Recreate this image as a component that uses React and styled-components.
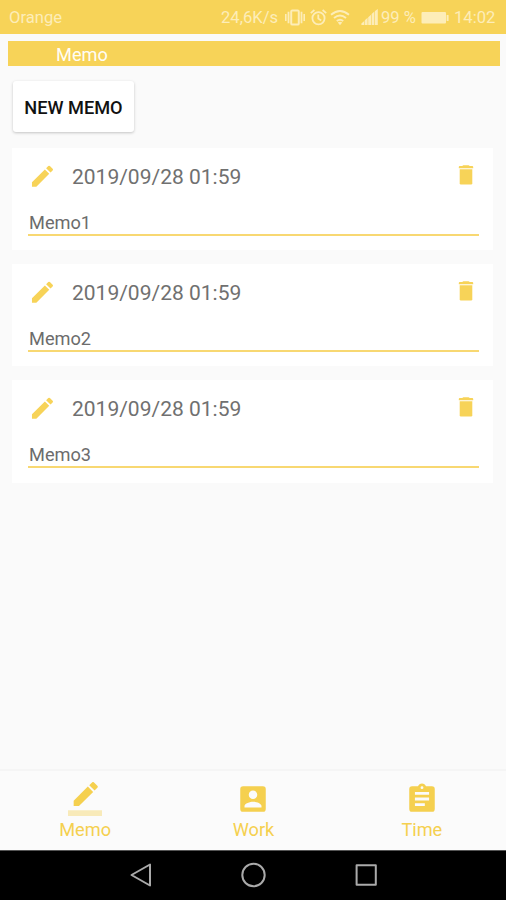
import React from "react";
import styled, { createGlobalStyle } from "styled-components";

const memos = [
  { date: "2019/09/28 01:59", text: "Memo1" },
  { date: "2019/09/28 01:59", text: "Memo2" },
  { date: "2019/09/28 01:59", text: "Memo3" },
];

const PencilIcon = () => (
  <svg width="28" height="28" viewBox="0 0 24 24" fill="currentColor">
    <path d="M3.4 17.45V21.2h3.75L18.21 10.14l-3.75-3.75L3.4 17.45zM21.11 7.24a1 1 0 0 0 0-1.41l-2.34-2.34a1 1 0 0 0-1.41 0l-1.83 1.83 3.75 3.75 1.83-1.83z" />
  </svg>
);

const TrashIcon = () => (
  <svg width="16" height="20" viewBox="0 0 16 20" fill="currentColor">
    <path d="M.8 3.2V1.9Q.8 1.1 1.8 1.1H4.2L5.4.3h5.2l1.2.8h2.4q1 0 1 .8v1.3z" />
    <path d="M1.7 4.3h12.6v13.9q0 1.2-1.2 1.2H2.9q-1.2 0-1.2-1.2z" />
  </svg>
);

const tabs = [
  {
    label: "Memo",
    icon: (
      <>
        <path d="M17.75 7L14 3.25l-10 10V17h3.75l10-10zm2.96-2.96a1 1 0 0 0 0-1.41L18.37.29a1 1 0 0 0-1.41 0L15 2.25 18.75 6l1.96-1.96z" />
        <path d="M0 20h24v4H0z" fillOpacity=".38" />
      </>
    ),
  },
  {
    label: "Work",
    icon: (
      <path d="M3 5v14a2 2 0 0 0 2 2h14a2 2 0 0 0 2-2V5a2 2 0 0 0-2-2H5a2 2 0 0 0-2 2zm12 4a3 3 0 1 1-6 0 3 3 0 0 1 6 0zm-9 8c0-2 4-3.1 6-3.1s6 1.1 6 3.1v1H6v-1z" />
    ),
  },
  {
    label: "Time",
    icon: (
      <path d="M19 3h-4.18C14.4 1.84 13.3 1 12 1s-2.4.84-2.82 2H5a2 2 0 0 0-2 2v14a2 2 0 0 0 2 2h14a2 2 0 0 0 2-2V5a2 2 0 0 0-2-2zm-7 0a1 1 0 1 1 0 2 1 1 0 0 1 0-2zm2 14H7v-2h7v2zm3-4H7v-2h10v2zm0-4H7V7h10v2z" />
    ),
  },
];

export default function App() {
  return (
    <Phone>
      <GlobalStyle />
      <StatusBar>
        <StatusText>Orange</StatusText>
        <StatusIcons>
          <StatusText $width={59}>24,6K/s</StatusText>
          <svg width="20" height="17" viewBox="0 0 20 17" fill="currentColor">
            <path d="M0 5h1.6v7H0zM2.6 2.8h1.8v11.4H2.6zM15.6 2.8h1.8v11.4h-1.8zM18.4 5H20v7h-1.6z" />
            <rect x="6.2" y="1.4" width="7.6" height="14.2" rx="1.2" fill="none" stroke="currentColor" strokeWidth="2" />
          </svg>
          <Alarm width="17" height="17" viewBox="0 0 17 17" fill="none" stroke="currentColor" strokeWidth="1.8">
            <circle cx="8.5" cy="9.2" r="6.1" />
            <path d="M.8 4.1L4.4 1M16.2 4.1L12.6 1M8.3 5.6v4l2.9 1.8" />
          </Alarm>
          <svg width="20" height="17" viewBox="0 0 20 17" fill="none" stroke="currentColor" strokeWidth="1.9">
            <path d="M1 5.7q9-7.6 18 0M4 9q6-5.2 12 0M6.8 12q3.2-2.7 6.4 0" />
            <path d="M7.8 13.5q2.2-1.6 4.4 0L10 16.2z" fill="currentColor" stroke="none" />
          </svg>
          <Signal width="18" height="17" viewBox="0 0 18 17" fill="currentColor">
            <path d="M.4 15.9v-1.5l2.8-2.5v4zM3.8 15.9v-4.6l2.8-2.5v7.1zM7.2 15.9V8.2L10 5.7v10.2zM10.6 15.9V5.1l2.8-2.5v13.3zM14 15.9V2L16.8 0v15.9z" />
          </Signal>
          <StatusText $width={35}>99 %</StatusText>
          <svg width="28" height="14" viewBox="0 0 28 14" fill="currentColor">
            <rect x=".5" y="1" width="24.5" height="11.5" rx="1" />
            <rect x="25.6" y="4" width="2" height="6" rx=".6" />
          </svg>
          <StatusText $width={42}>14:02</StatusText>
        </StatusIcons>
      </StatusBar>
      <TitleBar>Memo</TitleBar>
      <NewButton>NEW MEMO</NewButton>
      <MemoList>
        {memos.map((memo) => (
          <Card key={memo.text}>
            <CardHead>
              <PencilIcon />
              <MemoDate>{memo.date}</MemoDate>
              <TrashIcon />
            </CardHead>
            <MemoText>{memo.text}</MemoText>
          </Card>
        ))}
      </MemoList>
      <TabBar>
        {tabs.map((tab) => (
          <Tab key={tab.label}>
            <svg width="34" height="34" viewBox="0 0 24 24" fill="currentColor">
              {tab.icon}
            </svg>
            <span>{tab.label}</span>
          </Tab>
        ))}
      </TabBar>
      <SystemNav>
        <svg width="24" height="26" viewBox="0 0 24 26">
          <path d="M3.5 13L22 2.5v21z" />
        </svg>
        <svg width="26" height="26" viewBox="0 0 26 26">
          <circle cx="13.5" cy="13" r="11.2" />
        </svg>
        <svg width="24" height="26" viewBox="0 0 24 26">
          <rect x="2.6" y="3.2" width="19.2" height="19.6" />
        </svg>
      </SystemNav>
    </Phone>
  );
}

const GlobalStyle = createGlobalStyle`
  * {
    box-sizing: border-box;
  }
  body {
    margin: 0;
    font-family: Roboto, sans-serif;
  }
  svg {
    display: block;
    flex: none;
  }
`;

const Phone = styled.div`
  width: 506px;
  height: 900px;
  display: flex;
  flex-direction: column;
  background-color: #fafafa;
  overflow: hidden;
`;

const StatusBar = styled.header`
  height: 34px;
  flex: none;
  display: flex;
  align-items: center;
  justify-content: space-between;
  padding: 1px 10px 0 9px;
  background-color: #f7d358;
  color: #fdedb8;
`;

const StatusIcons = styled.div`
  display: flex;
  align-items: center;
  gap: 5px;
`;

const StatusText = styled.span`
  padding-top: 1px;
  width: ${(props) => (props.$width ? `${props.$width}px` : "auto")};
  font-size: 16.6px;
  line-height: 20px;
  white-space: nowrap;
`;

const Alarm = styled.svg`
  margin-right: -2px;
`;

const Signal = styled.svg`
  margin-left: 6px;
  margin-right: -3px;
`;

const TitleBar = styled.div`
  height: 25px;
  flex: none;
  margin: 7px 6px 0 8px;
  padding: 2px 0 0 48px;
  background-color: #f7d358;
  color: #fffdf5;
  font-size: 18.2px;
  line-height: 24px;
`;

const NewButton = styled.button`
  width: 121px;
  height: 51px;
  flex: none;
  margin: 15px 0 0 13px;
  padding: 2px 0 0;
  border: 0;
  border-radius: 3px;
  background-color: #fff;
  box-shadow: 0 1px 3px rgba(0, 0, 0, 0.22);
  color: #111;
  font-family: inherit;
  font-size: 18.2px;
  font-weight: 500;
  white-space: nowrap;
`;

const MemoList = styled.main`
  flex: 1;
  display: flex;
  flex-direction: column;
  gap: 14px;
  padding: 16px 13px 0 12px;
`;

const Card = styled.article`
  height: 102.2px;
  padding: 13px 14px 0 16px;
  background-color: #fff;
`;

const CardHead = styled.div`
  height: 30px;
  display: flex;
  align-items: center;
  padding-right: 5px;
  color: #f7d358;
  svg:last-child {
    margin-bottom: 3px;
  }
`;

const MemoDate = styled.span`
  flex: 1;
  margin-left: 16px;
  padding-top: 2px;
  color: #707070;
  font-size: 21px;
  line-height: 28px;
`;

const MemoText = styled.div`
  height: 45px;
  padding: 20px 0 0 1px;
  border-bottom: 2px solid #f8d872;
  color: #6c6c6c;
  font-size: 18.2px;
  line-height: 24px;
`;

const TabBar = styled.nav`
  height: 81px;
  flex: none;
  display: flex;
  border-top: 2px solid #f5f5f5;
  background-color: #fbfbfb;
`;

const Tab = styled.div`
  flex: 1;
  display: flex;
  flex-direction: column;
  align-items: center;
  gap: 3px;
  padding-top: 11px;
  color: #f5d04f;
  font-size: 18.2px;
  line-height: 22px;
  &:first-child {
    padding-left: 1px;
  }
`;

const SystemNav = styled.footer`
  height: 50px;
  flex: none;
  display: flex;
  align-items: center;
  justify-content: center;
  gap: 88px;
  padding-bottom: 1px;
  border-top: 1px solid #555;
  background-color: #000;
  svg {
    fill: none;
    stroke: #aaa;
    stroke-width: 2;
    stroke-linejoin: round;
  }
`;
